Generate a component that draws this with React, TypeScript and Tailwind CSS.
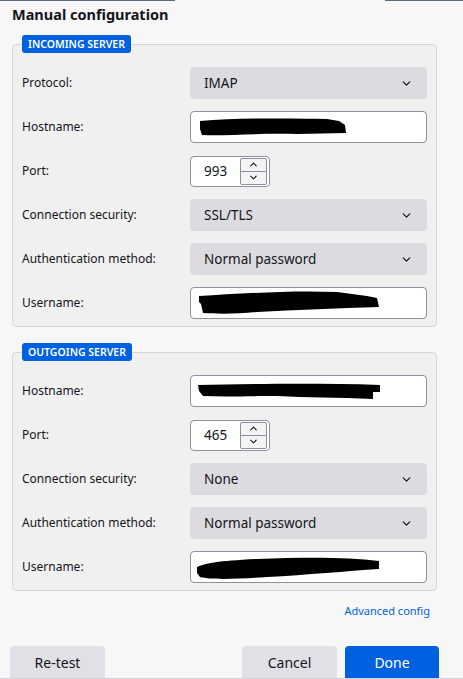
import React from "react";
import { ChevronDown, ChevronUp } from "lucide-react";

const FONT = { fontFamily: '"Segoe UI", "Noto Sans", "Open Sans", sans-serif' };

function Scribble({ d, w, h }: { d: string; w: number; h: number }) {
  return (
    <svg width={w} height={h} viewBox={`0 0 ${w} ${h}`} className="block">
      <path d={d} fill="#000" />
    </svg>
  );
}

function Row({ label, children }: { label: string; children: React.ReactNode }) {
  return (
    <div className="flex items-center h-[32px]">
      <div className="w-[168px] shrink-0 text-[12px] text-[#15141a]">{label}</div>
      <div className="flex-1 flex items-center">{children}</div>
    </div>
  );
}

function Select({ value }: { value: string }) {
  return (
    <div className="w-full h-[32px] rounded-[4px] bg-[#dcdce0] flex items-center justify-between pl-[14px] pr-[14px] text-[13.5px] text-[#15141a]">
      <span>{value}</span>
      <ChevronDown size={13} strokeWidth={2.2} className="text-[#15141a]" />
    </div>
  );
}

function TextBox({ children }: { children?: React.ReactNode }) {
  return (
    <div className="w-full h-[32px] rounded-[4px] bg-white border border-[#8f8f9d] flex items-center pl-[6px] overflow-hidden">
      {children}
    </div>
  );
}

function PortBox({ value }: { value: string }) {
  return (
    <div className="w-[80px] h-[31px] rounded-[4px] bg-white border border-[#8f8f9d] flex items-center justify-between pl-[13px] pr-[2px] text-[13.5px] text-[#15141a]">
      <span>{value}</span>
      <div className="w-[27px] h-[27px] border border-[#8f8f9d] rounded-[2px] flex flex-col bg-[#f4f4f4]">
        <div className="flex-1 flex items-center justify-center border-b border-[#8f8f9d]">
          <ChevronUp size={11} strokeWidth={2.4} className="text-[#15141a]" />
        </div>
        <div className="flex-1 flex items-center justify-center">
          <ChevronDown size={11} strokeWidth={2.4} className="text-[#15141a]" />
        </div>
      </div>
    </div>
  );
}

function Fieldset({ legend, children }: { legend: string; children: React.ReactNode }) {
  return (
    <div className="relative ml-3 w-[425px] rounded-[4px] border border-[#d7d7db] bg-[#f0f0f0] pt-[22px] pb-[7px] pl-[9px] pr-[9px] flex flex-col gap-3">
      <span className="absolute left-[9px] -top-[10px] h-[18px] px-[6px] rounded-[3px] bg-[#0061e0] text-white text-[10.5px] font-semibold leading-[18px]">
        {legend}
      </span>
      {children}
    </div>
  );
}

export default function App() {
  return (
    <div className="w-[463px] h-[679px] bg-[#f7f7f7] flex flex-col overflow-hidden" style={FONT}>
      <div className="flex h-px shrink-0">
        <div className="w-[175px] bg-[#5d6b78]" />
        <div className="flex-1" />
        <div className="w-[78px] bg-[#5d6b78]" />
      </div>
      <div className="h-[27px] leading-[27px] pl-3 text-[14.5px] font-bold text-[#15141a]">Manual configuration</div>

      <div className="mt-[16px]">
        <Fieldset legend="INCOMING SERVER">
          <Row label="Protocol:"><Select value="IMAP" /></Row>
          <Row label="Hostname:">
            <TextBox>
              <Scribble w={150} h={20} d="M3 4 C40 1 90 1 130 2 L142 4 L148 8 L149 16 L100 17 C60 16 30 19 5 18 L3 12 Z" />
            </TextBox>
          </Row>
          <Row label="Port:"><PortBox value="993" /></Row>
          <Row label="Connection security:"><Select value="SSL/TLS" /></Row>
          <Row label="Authentication method:"><Select value="Normal password" /></Row>
          <Row label="Username:">
            <TextBox>
              <Scribble w={190} h={26} d="M2 6 C40 4 90 0 140 2 L170 6 L180 8 L182 17 C140 18 100 20 60 22 C40 24 20 24 6 23 L4 14 L2 12 Z" />
            </TextBox>
          </Row>
        </Fieldset>
      </div>

      <div className="mt-[25px]">
        <Fieldset legend="OUTGOING SERVER">
          <Row label="Hostname:">
            <TextBox>
              <Scribble w={186} h={20} d="M1 4 C50 3 120 2 183 4 L183 11 L176 11 L176 18 C140 16 110 17 80 15 C50 15 30 16 6 15 L2 10 Z" />
            </TextBox>
          </Row>
          <Row label="Port:"><PortBox value="465" /></Row>
          <Row label="Connection security:"><Select value="None" /></Row>
          <Row label="Authentication method:"><Select value="Normal password" /></Row>
          <Row label="Username:">
            <TextBox>
              <Scribble w={184} h={28} d="M0 14 C10 10 20 8 60 6 C110 4 150 4 182 8 L182 16 C150 18 110 22 70 24 C40 26 15 27 3 24 L0 20 Z" />
            </TextBox>
          </Row>
        </Fieldset>
      </div>

      <div className="mt-[12px] h-[16px] flex justify-end pr-[33px]">
        <span className="text-[11px] leading-[16px] text-[#0061e0]">Advanced config</span>
      </div>

      <div className="mt-[27px] h-[32px] flex px-[10px]">
        <button className="w-[95px] h-[32px] rounded-t-[4px] bg-[#e0e0e6] text-[14px] text-[#15141a]">Re-test</button>
        <div className="flex-1" />
        <button className="w-[95px] h-[32px] rounded-t-[4px] bg-[#e0e0e6] text-[14px] text-[#15141a]">Cancel</button>
        <button className="ml-[8px] mr-[14px] w-[94px] h-[32px] rounded-t-[4px] bg-[#0061e0] text-[14px] text-white">Done</button>
      </div>
      <div className="h-px bg-[#d4d4d8] shrink-0" />
    </div>
  );
}
